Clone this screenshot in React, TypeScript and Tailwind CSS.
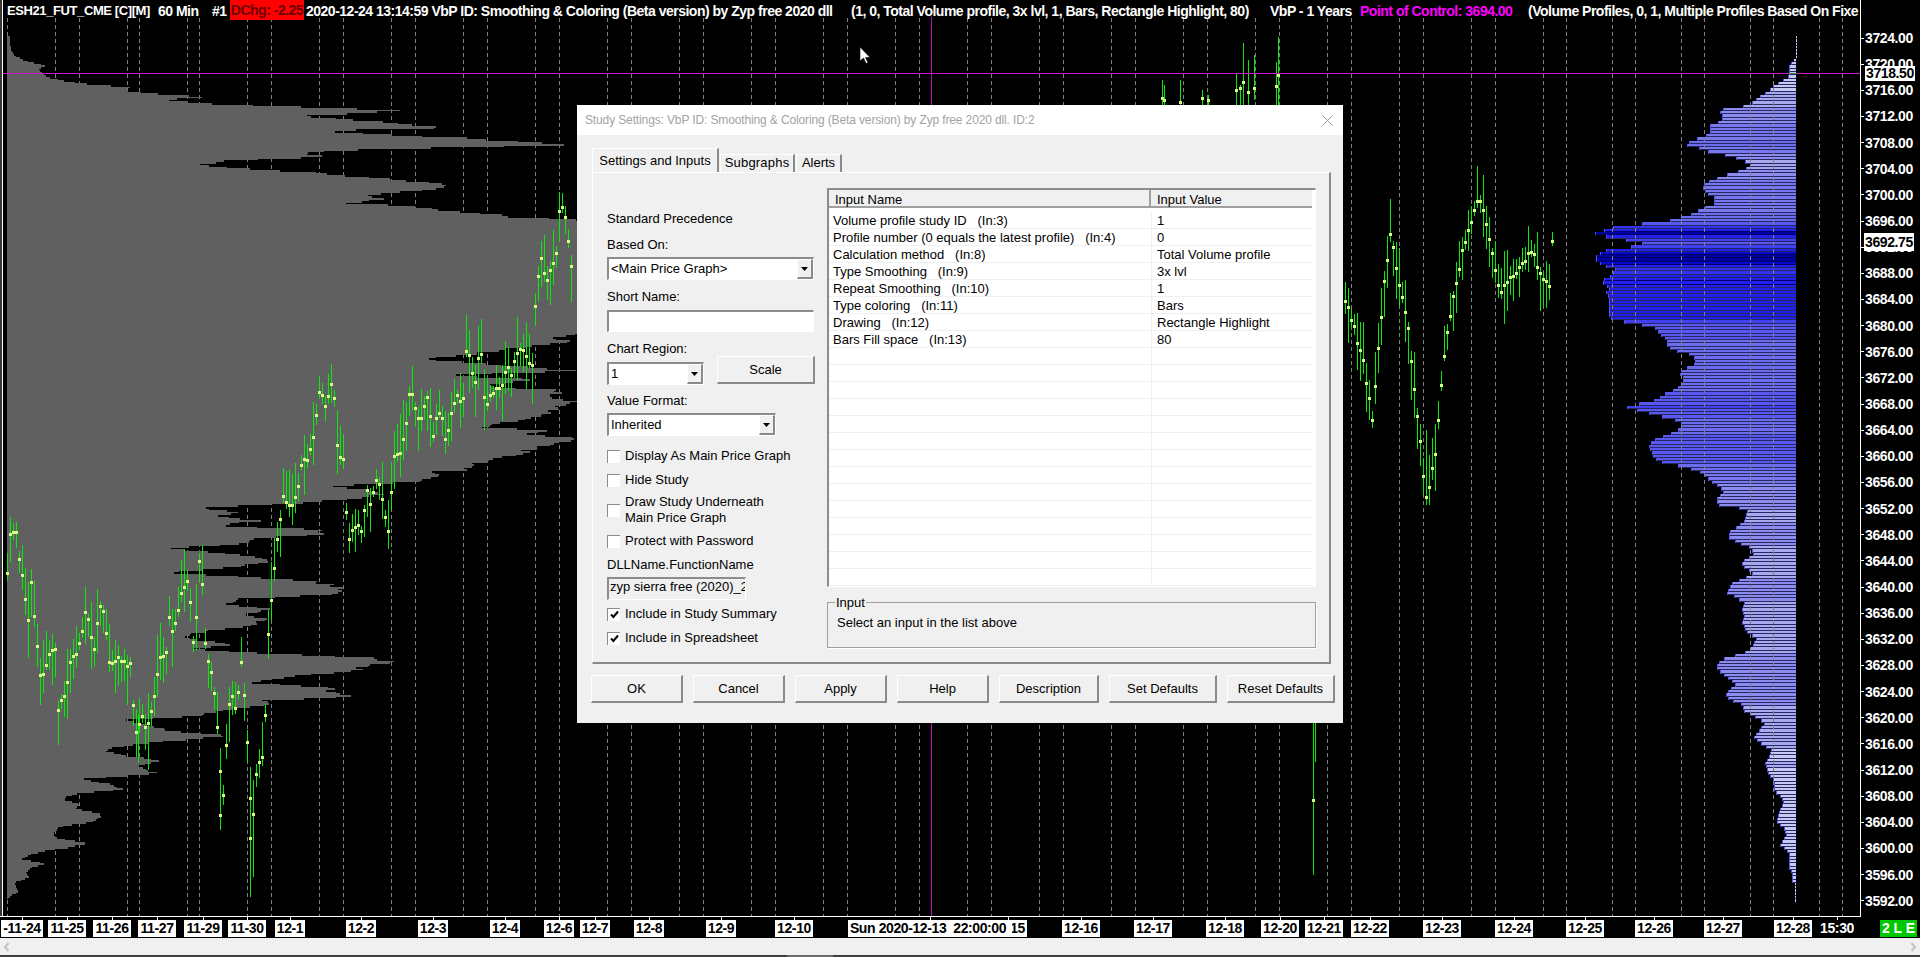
const FONT = "[font-family:'Liberation_Sans',Arial,sans-serif]"

// chart data is read off the picture, [x, y] keypoints in screen pixels
const grid = [7.5, 55.5, 79.5, 127.5, 139.5, 187.5, 199.5, 247.5, 271.5, 319.5, 343.5, 391.5, 415.5, 463.5, 487.5, 535.5, 559.5, 607.5, 631.5, 679.5, 703.5, 751.5, 775.5, 823.5, 847.5, 895.5, 919.5, 967.5, 991.5, 1039.5, 1063.5, 1111.5, 1135.5, 1183.5, 1207.5, 1255.5, 1279.5, 1327.5, 1351.5, 1399.5, 1423.5, 1471.5, 1495.5, 1543.5, 1566.5, 1612.5, 1635.5, 1681.5, 1704.5, 1750.5, 1773.5, 1819.5, 1842.5]

const grayTop = [[18,26],[60,30],[75,40],[90,70],[105,125],[115,105],[128,115],[140,135],[150,175],[160,235],[170,350],[180,350],[190,430],[198,555],[208,440],[220,575],[232,920],[240,1105],[255,820],[265,945],[278,1080],[292,1210],[300,880],[315,1125],[325,1310],[335,1480],[343,1540],[350,1240],[358,920],[368,820],[378,915],[388,640],[400,550],[412,620],[425,870],[435,945],[445,1070],[465,1235],[478,1150],[490,1005],[505,1050],[517,930],[525,1110],[535,1170],[548,1300],[558,1400],[568,1600],[905,1600],[915,1525],[935,1535],[960,1355],[985,1150],[1000,1330],[1020,1568],[1035,1180],[1045,1480],[1065,1300],[1080,1530],[1100,1485],[1110,1568],[1165,1440],[1180,1345],[1190,1312],[1200,1480],[1212,1445],[1220,1568],[1300,1300],[1315,1235],[1320,1300]]
const grayBottom = [[0,1200],[20,1185],[35,1130],[45,890],[55,975],[70,1060],[85,970],[100,750],[112,545],[125,650],[135,585],[150,695],[165,600],[175,850],[190,880],[205,680],[220,650],[232,460],[240,510],[250,655],[270,725],[290,640],[305,440],[320,690],[330,840],[345,905],[358,920],[372,890],[385,650],[400,625],[415,730],[432,665],[445,715],[462,700],[478,580],[490,520],[505,505],[520,635],[535,510],[548,715],[560,980],[573,1105],[585,990],[600,960],[610,850],[622,775],[635,690],[652,900],[667,905],[677,965],[690,720],[705,720],[720,590],[735,540],[748,340],[765,410],[780,470],[795,615],[810,470],[825,340],[840,280],[855,340],[868,435],[885,370],[908,430],[925,225],[940,300],[955,340],[970,200],[985,170],[1000,215],[1015,200],[1025,265],[1040,275],[1055,245],[1070,155],[1085,150],[1100,145],[1118,240],[1130,185],[1140,125],[1150,85],[1165,60],[1178,125],[1190,85],[1205,70],[1220,80],[1235,40],[1250,45],[1265,50],[1275,30],[1285,18]]

const blueTop = [[18,707],[85,707],[88,697],[105,688],[130,688],[140,680],[150,660],[165,640],[180,625],[195,598],[215,575],[225,545],[235,481],[250,481],[258,490],[270,481],[285,445],[300,453],[315,435],[325,400],[335,381],[345,381],[352,418],[362,445],[370,490],[380,525],[390,553],[400,570],[415,553],[420,535],[430,500],[440,470],[455,435],[472,427],[490,445],[500,463],[520,463],[530,430],[545,400],[560,355],[570,320],[578,238],[585,165],[595,138],[605,102],[615,130],[622,175],[630,220],[636,247],[645,220],[655,138],[665,120],[680,102],[695,120],[705,140],[715,165],[730,157],[745,130],[755,130],[770,148],[785,138],[800,148],[855,148],[865,157],[875,210],[885,265],[895,300],[905,292],[915,310],[930,320],[945,320],[960,350],[970,390],[985,408],[1000,400],[1012,375],[1025,355],[1040,372],[1060,363],[1075,345],[1090,310],[1105,292],[1115,247],[1125,195],[1135,225],[1150,280],[1165,345],[1180,372],[1195,355],[1210,320],[1225,285],[1240,265],[1260,274],[1280,283],[1295,310],[1305,365],[1320,418],[1335,435]]
const blueBottom = [[0,453],[10,470],[30,490],[50,472],[70,472],[85,562],[120,553],[135,535],[150,508],[170,508],[185,535],[200,572],[220,580],[235,553],[245,545],[260,553],[275,580],[290,553],[305,517],[320,508],[335,499],[350,530],[365,553],[385,545],[410,553],[420,545],[440,553],[455,562],[470,589],[490,580],[510,562],[525,517],[535,481],[550,472],[565,472],[580,490],[595,508],[610,526],[625,508],[640,499],[655,508],[670,544],[690,553],[705,580],[725,616],[745,598],[765,580],[785,598],[805,634],[830,625],[845,616],[880,625],[900,643],[930,643],[945,660],[960,670],[985,660],[1005,652],[1025,652],[1040,670],[1060,680],[1075,670],[1090,660],[1110,680],[1125,688],[1165,688],[1175,697],[1200,697],[1210,706],[1258,706]]

const traceA = [[20,300],[30,180],[45,190],[55,290],[65,330],[75,490],[85,330],[100,500],[110,625],[130,565],[150,510],[155,725],[165,700],[180,660],[195,545],[205,575],[220,505],[235,425],[255,540],[270,410],[285,430],[295,575],[320,560],[345,575],[360,585],[365,800],[385,735],[400,785],[415,720],[425,650],[440,525],[450,595],[460,425],[470,490],[480,455],[495,370],[515,335],[530,590],[540,275],[550,310],[555,500],[565,565],[580,630],[590,750],[597,845],[605,1035],[615,865],[620,715],[630,680],[645,720],[655,595],[660,575],[677,885],[686,1105],[695,940],[702,895],[712,855],[720,880],[725,570],[740,360],[750,250],[760,180],[770,70],[785,100],[810,85],[815,25]]
const traceB = [[820,1305],[850,1258],[870,1070],[885,1130],[900,1065],[906,1018],[915,1220],[925,1290],[935,1300]]
const traceC = [[940,95],[950,210],[965,160],[990,175],[995,30],[1010,100],[1030,20],[1050,155],[1060,180],[1068,15]]
const traceD = [[1075,1265],[1095,1260],[1105,1190],[1115,1075],[1135,1140],[1145,1180],[1160,1105],[1168,1080],[1175,1228],[1190,1165],[1200,1128],[1215,1235],[1225,1165],[1240,1095],[1260,1140],[1265,970],[1275,950],[1285,1015],[1290,1045],[1300,1075],[1305,870],[1315,1075],[1325,1125],[1345,1085],[1365,1070],[1380,1000],[1395,1040],[1405,970],[1420,940],[1435,985],[1450,1015],[1458,810],[1470,675],[1490,750],[1503,695],[1515,680],[1525,510],[1535,530],[1545,600],[1550,680],[1560,750]]
const traceRight = [[1345,300],[1362,355],[1372,420],[1384,282],[1390,233],[1408,330],[1426,500],[1435,453],[1445,343],[1463,245],[1479,196],[1488,233],[1500,294],[1512,275],[1531,251],[1549,288],[1553,227]]
// x, wick top, wick bottom, close
const loose = [[1162,80,105,98],[1164,85,105,100],[1180,80,105,102],[1202,90,105,98],[1208,95,105,100],[1236,74,105,90],[1240,85,105,88],[1243,43,105,82],[1248,60,105,92],[1254,55,100,88],[1278,37,105,75],[1276,62,105,86],[1313,723,875,800],[1315,723,762,0],[220,748,830,815],[250,767,897,838],[253,780,877,0],[138,715,763,0],[1426,430,505,0],[148,770,750,0]]

const rnd = (i: number) => {
  const s = Math.sin(i * 12.9898) * 43758.5453
  return s - Math.floor(s)
}

const lerp = (pts: number[][], v: number) => {
  for (let i = 1; i < pts.length; i++) {
    if (v <= pts[i][0]) {
      const [a, b] = pts[i - 1]
      const [c, d] = pts[i]
      return b + ((d - b) * (v - a)) / (c - a || 1)
    }
  }
  return pts[pts.length - 1][1]
}

const grayPts = [
  ...grayTop.map(([y, x]) => [30 + y / 3, x / 2.722]),
  ...grayBottom.map(([y, x]) => [470 + y / 3, x / 2.722]),
]
const bluePts = [
  ...blueTop.map(([y, x]) => [30 + y / 3, 1560 + x / 3]),
  ...blueBottom.map(([y, x]) => [480 + y / 3, 1560 + x / 3]),
]

function grayPath() {
  let d = 'M7 36'
  for (let y = 36, i = 0; y < 899; y += 1.635, i++) {
    const x = lerp(grayPts, y)
    const jag = x > 40 ? (rnd(i) - 0.5) * Math.min(x * 0.05, 16) : 0
    d += `H${(x + jag).toFixed(1)}V${(y + 1.635).toFixed(1)}`
  }
  return d + 'H7Z'
}

const stops = [[0, '#c8c8f4'], [30, '#a8a8f0'], [55, '#8c8cf0'], [80, '#7878ee'], [100, '#6c6cee'], [130, '#5858f0'], [160, '#4040f0'], [175, '#3232f0'], [185, '#2020ea'], [195, '#0808c8'], [199, '#00009a']] as const

function rowColor(w: number) {
  let c = stops[0][1] as string
  for (const [limit, col] of stops) if (w >= limit) c = col
  return c
}

const blueRows = (() => {
  const rows: { y: number; h: number; x: number; w: number; c: string }[] = []
  for (let y = 36; y < 900; y += 3.27) {
    const x = Math.round(lerp(bluePts, y))
    const w = Math.max(1, 1796 - x)
    const top = Math.round(y)
    rows.push({ y: top, h: Math.round(y + 3.27) - top, x, w, c: rowColor(w) })
  }
  return rows
})()

function candlePaths() {
  let wicks = ''
  let bodies = ''
  const traces = [
    [...traceA.map(([x, y]) => [x / 2.722, 470 + y / 3]), ...traceB.map(([x, y]) => [x / 2.722, 30 + y / 3]), ...traceC.map(([x, y]) => [x / 2.722, 470 + y / 3]), ...traceD.map(([x, y]) => [x / 2.722, 30 + y / 3])],
    traceRight,
  ]
  let n = 1
  traces.forEach((t) => {
    for (let x = t[0][0]; x <= t[t.length - 1][0]; x += 3, n++) {
      const px = Math.round(x) + 0.5
      const y = Math.round(lerp(t, x) + (rnd(n) - 0.5) * 8)
      const up = 5 + rnd(n + 500) ** 1.5 * 34
      const down = 5 + rnd(n + 900) ** 1.5 * 34
      wicks += `M${px} ${Math.round(y - up)}V${Math.round(y + down)}`
      bodies += `M${px - 1.5} ${y - 1}h3v3h-3z`
    }
  })
  loose.forEach(([x, a, b, c]) => {
    wicks += `M${x + 0.5} ${Math.min(a, b)}V${Math.max(a, b)}`
    if (c) bodies += `M${x - 1} ${c - 1}h3v3h-3z`
  })
  return { wicks, bodies }
}

const candles = candlePaths()

function ChartDrawing() {
  const dashes = (min: number, max: number) => grid.filter((x) => x >= min && x <= max).map((x) => (
    <line key={x} x1={x} x2={x} y1={18} y2={916} stroke="#808080" strokeDasharray="4 3" />
  ))
  return (
    <svg width={1860} height={916} className="absolute left-0 top-0" shapeRendering="crispEdges">
      <rect x={0} y={0} width={2} height={916} fill="#383838" />
      <rect x={2} y={0} width={1} height={916} fill="#ffffff" />
      {dashes(0, 1860)}
      <path d={grayPath()} fill="#606060" />
      {blueRows.map((r) => (
        <g key={r.y}>
          <rect x={r.x} y={r.y} width={r.w} height={r.h - 1} fill={r.c} />
          <rect x={r.x} y={r.y + r.h - 1} width={r.w} height={1} fill={r.w > 190 ? '#00006a' : '#282860'} />
          {r.w > 2 && <rect x={r.x} y={r.y} width={1} height={r.h} fill="#5050e8" />}
        </g>
      ))}
      {dashes(1600, 1797)}
      <path d={candles.wicks} stroke="#0be80b" fill="none" />
      <path d={candles.bodies} fill="#d8fb86" />
      <line x1={931.5} x2={931.5} y1={17} y2={916} stroke="#c010c0" />
      <line x1={3} x2={1860} y1={73.5} y2={73.5} stroke="#d014d0" />
      <rect x={1789} y={73} width={7} height={1} fill="#20a020" />
      {/* mouse pointer */}
      <path d="M860 47 V61 L863.5 58 L866 63.5 L868 62.5 L865.5 57.5 L870 57.5 Z" fill="#ffffff" stroke="#000000" strokeWidth="0.6" shapeRendering="auto" />
    </svg>
  )
}

function ChartHeader() {
  return (
    <div className="relative flex h-[20px] items-start overflow-hidden whitespace-pre pl-[7px] pt-[3px] text-[14px] font-bold leading-[16px] tracking-[-0.5px] text-white">
      <span className="w-[151px] shrink-0 text-[13px] tracking-[-0.4px]">ESH21_FUT_CME [C][M]</span>
      <span className="w-[54px] shrink-0">60 Min</span>
      <span className="w-[18px] shrink-0">#1</span>
      <span className="-mt-[3px] flex h-[20px] w-[74px] shrink-0 items-center justify-center bg-[#ff0000] text-[#700000]">DChg: -2.25</span>
      <span className="ml-[2px] w-[545px] shrink-0">2020-12-24 13:14:59 VbP ID: Smoothing &amp; Coloring (Beta version) by Zyp free 2020 dll</span>
      <span className="w-[419px] shrink-0">(1, 0, Total Volume profile, 3x lvl, 1, Bars, Rectangle Highlight, 80)</span>
      <span className="w-[90px] shrink-0">VbP - 1 Years</span>
      <span className="w-[168px] shrink-0 text-[#ff00ff]">Point of Control: 3694.00</span>
      <span className="shrink-0">(Volume Profiles, 0, 1, Multiple Profiles Based On Fixe</span>
    </div>
  )
}

const prices = Array.from({ length: 34 }, (_, i) => (3724 - i * 4).toFixed(2))

function PriceAxis() {
  return (
    <div className="relative w-[60px] border-l border-white pt-[25px] text-[14px] font-bold tracking-[-0.4px] text-white">
      {prices.map((p) => (
        <div key={p} className="flex h-[26.15px] items-center">
          <span className="mr-[1px] h-px w-[3px] bg-white" />
          <span className="leading-none">{p}</span>
        </div>
      ))}
      <span className="absolute left-[4px] top-[66px] bg-white px-px text-[14px] leading-[15px] text-black">3718.50</span>
      <span className="absolute left-[3px] top-[233px] bg-white px-[1px] py-[1px] text-[14px] leading-[16px] text-black">3692.75</span>
    </div>
  )
}

const ticks: [string, number][] = [
  ['-11-24', 22], ['11-25', 67], ['11-26', 112], ['11-27', 157], ['11-29', 203], ['11-30', 247], ['12-1', 290], ['12-2', 361], ['12-3', 433], ['12-4', 505], ['12-6', 559], ['12-7', 595], ['12-8', 649], ['12-9', 721], ['12-10', 794], ['12-15', 1008], ['Sun 2020-12-13  22:00:00', 930], ['12-16', 1081], ['12-17', 1153], ['12-18', 1225], ['12-20', 1280], ['12-21', 1324], ['12-22', 1370], ['12-23', 1442], ['12-24', 1514], ['12-25', 1585], ['12-26', 1654], ['12-27', 1723], ['12-28', 1793],
]

function TimeAxis() {
  let prev = 0
  return (
    <div className="flex h-[21px] overflow-hidden whitespace-pre bg-black text-[14px] font-bold tracking-[-0.4px] text-black">
      {ticks.map(([label, center]) => {
        const gap = center - prev
        prev = center
        const wide = label.startsWith('Sun')
        return (
          <div key={label} className={wide ? 'relative z-10 flex w-0 flex-col items-center' : 'flex w-0 flex-col items-center'} style={{ marginLeft: gap }}>
            <span className="h-[3px] w-px shrink-0 bg-white" />
            <span className={wide ? 'shrink-0 bg-white pl-[2px] pr-[6px] leading-[17px]' : 'shrink-0 bg-white px-[2px] leading-[17px]'}>{label}</span>
          </div>
        )
      })}
      <div className="flex w-0 flex-col items-center text-white" style={{ marginLeft: 1837 - prev }}>
        <span className="h-[3px] w-px shrink-0 bg-white" />
        <span className="shrink-0 leading-[17px]">15:30</span>
      </div>
      <span className="ml-auto mr-[3px] mt-[3px] flex h-[17px] w-[37px] items-center justify-center whitespace-pre bg-[#00c800] text-[14px] tracking-normal text-white">2 L E</span>
    </div>
  )
}

function DropArrow() {
  return (
    <span className="flex h-full w-[16px] shrink-0 items-center justify-center border-l border-t border-white border-b-2 border-r-2 border-b-[#8a8a8a] border-r-[#8a8a8a] bg-[#f0f0f0]">
      <svg width="7" height="4" viewBox="0 0 7 4"><path d="M0 0h7L3.5 4z" fill="#000" /></svg>
    </span>
  )
}

const sunken = 'border-l-2 border-t-2 border-r border-b border-l-[#8c8c8c] border-t-[#8c8c8c] border-r-white border-b-white'

function Select({ value, width }: { value: string; width: string }) {
  return (
    <div className={`flex h-[23px] items-center bg-white pl-[2px] ${sunken} ${width}`}>
      <span className="flex-1 overflow-hidden whitespace-nowrap">{value}</span>
      <DropArrow />
    </div>
  )
}

function Check({ label, checked, className }: { label: React.ReactNode; checked?: boolean; className: string }) {
  return (
    <div className={`flex items-center gap-[5px] ${className}`}>
      <span className="flex h-[13px] w-[13px] shrink-0 items-center justify-center border-l border-t border-[#8c8c8c] bg-white">
        {checked && (
          <svg width="9" height="9" viewBox="0 0 9 9"><path d="M1 4.5 L3.4 7 L8 1.5" fill="none" stroke="#000" strokeWidth="2" /></svg>
        )}
      </span>
      <span className="leading-[16px]">{label}</span>
    </div>
  )
}

function Button({ label, width }: { label: string; width: string }) {
  return (
    <button className={`h-[28px] border-l border-t border-white border-b-2 border-r-2 border-b-[#8a8a8a] border-r-[#8a8a8a] bg-[#f0f0f0] text-[13px] text-black ${width}`}>
      {label}
    </button>
  )
}

const inputs: [string, string][] = [
  ['Volume profile study ID   (In:3)', '1'],
  ['Profile number (0 equals the latest profile)   (In:4)', '0'],
  ['Calculation method   (In:8)', 'Total Volume profile'],
  ['Type Smoothing   (In:9)', '3x lvl'],
  ['Repeat Smoothing   (In:10)', '1'],
  ['Type coloring   (In:11)', 'Bars'],
  ['Drawing   (In:12)', 'Rectangle Highlight'],
  ['Bars Fill space   (In:13)', '80'],
]

function InputList() {
  const rows = Array.from({ length: 22 }, (_, i) => inputs[i] ?? ['', ''])
  return (
    <div className={`h-[399px] w-[489px] overflow-hidden bg-white ${sunken}`}>
      <div className="flex h-[18px] w-[483px] border-b-2 border-[#a0a0a0] bg-[#f0f0f0] leading-[20px]">
        <div className="w-[322px] border-r-2 border-[#a0a0a0] pl-[6px]">Input Name</div>
        <div className="pl-[6px]">Input Value</div>
      </div>
      <div className="mt-[4px] w-[484px]">
        {rows.map(([name, value], i) => (
          <div key={i} className="grid h-[17px] grid-cols-[323px_161px] border-b border-[#f0f0f0] leading-[18px]">
            <div className="whitespace-pre border-r border-[#f0f0f0] pl-[4px]">{name}</div>
            <div className="pl-[5px]">{value}</div>
          </div>
        ))}
      </div>
    </div>
  )
}

function StudyDialog() {
  return (
    <div className="absolute left-[577px] top-[105px] h-[618px] w-[766px] bg-[#f0f0f0] text-[13px] leading-[16px] text-black">
      <div className="flex h-[30px] items-center justify-between bg-white pl-[8px] pr-[10px] text-[12px] tracking-[-0.13px] text-[#a3a3a3]">
        <span>Study Settings: VbP ID: Smoothing &amp; Coloring (Beta version) by Zyp free 2020 dll. ID:2</span>
        <svg width="11" height="11" viewBox="0 0 11 11"><path d="M.5.5l10 10M10.5.5l-10 10" stroke="#9a9a9a" /></svg>
      </div>

      <div className="ml-[15px] mt-[15px] flex h-[22px] items-end">
        <div className="relative z-10 flex h-[24px] w-[127px] items-center justify-center border-l border-t border-white border-r-2 border-r-[#8a8a8a] bg-[#f0f0f0]">Settings and Inputs</div>
        <div className="ml-[1px] flex h-[18px] w-[75px] items-center justify-center border-l border-t border-white border-r-2 border-r-[#8a8a8a] pb-[1px] tracking-[0.2px]">Subgraphs</div>
        <div className="ml-[1px] flex h-[18px] w-[46px] items-center justify-center border-l border-t border-white border-r-2 border-r-[#8a8a8a] pb-[1px]">Alerts</div>
      </div>

      <div className="ml-[15px] flex h-[492px] w-[739px] border-l border-t border-white border-b-2 border-r-2 border-b-[#8a8a8a] border-r-[#8a8a8a] pl-[14px] pt-[15px]">
        <div className="w-[220px] pt-[23px]">
          <div>Standard Precedence</div>
          <div className="mt-[10px]">Based On:</div>
          <div className="mt-[4px]"><Select value="<Main Price Graph>" width="w-[207px]" /></div>
          <div className="mt-[9px]">Short Name:</div>
          <div className={`mt-[5px] h-[22px] w-[207px] bg-white ${sunken}`} />
          <div className="mt-[9px]">Chart Region:</div>
          <div className="flex h-[28px] items-end">
            <Select value="1" width="w-[97px]" />
            <div className="-mt-[1px] ml-[13px] self-start"><Button label="Scale" width="w-[98px]" /></div>
          </div>
          <div className="mt-[8px]">Value Format:</div>
          <div className="mt-[4px]"><Select value="Inherited" width="w-[169px]" /></div>
          <Check className="mt-[12px]" label="Display As Main Price Graph" />
          <Check className="mt-[8px]" label="Hide Study" />
          <Check className="mt-[6px]" label={<>Draw Study Underneath<br />Main Price Graph</>} />
          <Check className="mt-[7px]" label="Protect with Password" />
          <div className="mt-[8px]">DLLName.FunctionName</div>
          <div className={`mt-[4px] h-[23px] w-[139px] overflow-hidden whitespace-nowrap pl-[1px] ${sunken}`}>zyp sierra free (2020)_2020</div>
          <Check checked className="mt-[6px]" label="Include in Study Summary" />
          <Check checked className="mt-[8px]" label="Include in Spreadsheet" />
        </div>

        <div>
          <InputList />
          <div className="relative mt-[15px] h-[46px] w-[489px] border border-[#a0a0a0] pl-[9px] pt-[12px] shadow-[1px_1px_0_#ffffff]">
            <span className="absolute left-[7px] top-[-8px] bg-[#f0f0f0] px-px">Input</span>
            Select an input in the list above
          </div>
        </div>
      </div>

      <div className="ml-[14px] mt-[11px] flex gap-[10px]">
        <Button label="OK" width="w-[92px]" />
        <Button label="Cancel" width="w-[92px]" />
        <Button label="Apply" width="w-[92px]" />
        <Button label="Help" width="w-[92px]" />
        <Button label="Description" width="w-[100px]" />
        <Button label="Set Defaults" width="w-[108px]" />
        <Button label="Reset Defaults" width="w-[108px]" />
      </div>
    </div>
  )
}

export default function App() {
  return (
    <div className={`relative flex h-[957px] w-[1920px] flex-col overflow-hidden bg-black ${FONT}`}>
      <div className="flex h-[917px]">
        <div className="relative h-[917px] w-[1860px] border-b border-white">
          <ChartDrawing />
          <ChartHeader />
        </div>
        <PriceAxis />
      </div>
      <TimeAxis />
      <div className="flex h-[17px] items-center justify-between bg-[#f0f0f0] px-[3px]">
        <svg width="7" height="10" viewBox="0 0 7 10"><path d="M5.5 1L2 5l3.5 4" fill="none" stroke="#c4c4c4" strokeWidth="2" /></svg>
        <svg width="7" height="10" viewBox="0 0 7 10"><path d="M1.5 1L5 5 1.5 9" fill="none" stroke="#c4c4c4" strokeWidth="2" /></svg>
      </div>
      <div className="flex h-[2px] bg-[#404040]">
        <span className="ml-[787px] h-full w-[46px] bg-[#6a6a6a]" />
      </div>
      <StudyDialog />
    </div>
  )
}
